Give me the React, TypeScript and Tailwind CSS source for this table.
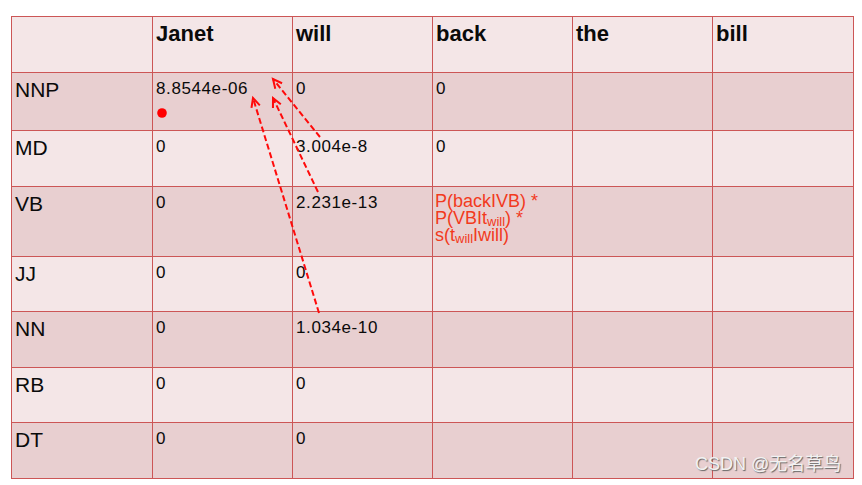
const cols = ["", "Janet", "will", "back", "the", "bill"];

type Row = { tag: string; h: string; bg: string; vals: (string | null)[] };

const LIGHT = "bg-[#f4e6e7]";
const DARK = "bg-[#e8cfd0]";

const rows: Row[] = [
  { tag: "NNP", h: "h-[58px]", bg: DARK, vals: ["8.8544e-06", "0", "0", null, null] },
  { tag: "MD", h: "h-[56px]", bg: LIGHT, vals: ["0", "3.004e-8", "0", null, null] },
  { tag: "VB", h: "h-[70px]", bg: DARK, vals: ["0", "2.231e-13", null, null, null] },
  { tag: "JJ", h: "h-[55px]", bg: LIGHT, vals: ["0", "0", null, null, null] },
  { tag: "NN", h: "h-[56px]", bg: DARK, vals: ["0", "1.034e-10", null, null, null] },
  { tag: "RB", h: "h-[55px]", bg: LIGHT, vals: ["0", "0", null, null, null] },
  { tag: "DT", h: "h-[56px]", bg: DARK, vals: ["0", "0", null, null, null] },
];

const colW = (i: number) => (i === 0 || i === 5 ? "w-[141px]" : "w-[140px]");

function Formula() {
  return (
    <div className="pl-[2px] pt-[6px] text-[18px] leading-[17px] text-[#f23a1d]">
      <div>P(backIVB) *</div>
      <div>
        P(VBIt<sub className="text-[13px] leading-none relative top-[2px]">will</sub>) *
      </div>
      <div>
        s(t<sub className="text-[13px] leading-none relative top-[2px]">will</sub>Iwill)
      </div>
    </div>
  );
}

function Arrows() {
  const lines = [
    [320, 137, 273, 79],
    [318, 192, 273, 98],
    [319, 313, 253, 98],
  ];
  return (
    <svg className="absolute left-0 top-0 pointer-events-none" width={862} height={485}>
      {lines.map(([x1, y1, x2, y2], i) => {
        const a = Math.atan2(y1 - y2, x1 - x2);
        const s = 10;
        const w = 0.45;
        const p1 = [x2 + s * Math.cos(a + w), y2 + s * Math.sin(a + w)];
        const p2 = [x2 + s * Math.cos(a - w), y2 + s * Math.sin(a - w)];
        return (
          <g key={i} stroke="#ff0a0a" strokeWidth={2} fill="none">
            <line x1={x1} y1={y1} x2={x2} y2={y2} strokeDasharray="6 3" />
            <polyline points={`${p1[0]},${p1[1]} ${x2},${y2} ${p2[0]},${p2[1]}`} />
          </g>
        );
      })}
      <circle cx={162} cy={113} r={4.8} fill="#ff0000" />
    </svg>
  );
}

export default function App() {
  return (
    <div
      className="relative w-[862px] h-[485px] bg-white text-[#0a0a0a]"
      style={{ fontFamily: '"Liberation Sans", Arial, sans-serif' }}
    >
      <div className="absolute left-0 top-0 pt-[16px] pl-[11px]">
        <div className="border-l border-t border-[#cc5656] w-[843px]">
          <div className={`flex h-[56px] ${LIGHT}`}>
            {cols.map((c, i) => (
              <div
                key={i}
                className={`${colW(i)} border-r border-b border-[#cc5656] pl-[3px] pt-[6px] text-[22px] font-bold leading-none`}
              >
                {c}
              </div>
            ))}
          </div>
          {rows.map((r) => (
            <div key={r.tag} className={`flex ${r.h} ${r.bg}`}>
              <div className="w-[141px] border-r border-b border-[#cc5656] pl-[3px] pt-[6px] text-[21px] leading-none">
                {r.tag}
              </div>
              {r.vals.map((v, i) => (
                <div
                  key={i}
                  className={`${colW(i + 1)} border-r border-b border-[#cc5656]`}
                >
                  {r.tag === "VB" && i === 2 ? (
                    <Formula />
                  ) : v !== null ? (
                    <div className="pl-[3px] pt-[7px] text-[17px] leading-none tracking-[0.6px]">
                      {v}
                    </div>
                  ) : null}
                </div>
              ))}
            </div>
          ))}
        </div>
      </div>
      <Arrows />
      <div
        className="absolute left-[695px] top-[455px] text-[18px] leading-none text-[#f2f2f2] [text-shadow:1px_1px_1px_#666]"
        style={{ fontFamily: '"Liberation Sans", "Noto Sans CJK SC", sans-serif' }}
      >
        CSDN @无名草鸟
      </div>
    </div>
  );
}
